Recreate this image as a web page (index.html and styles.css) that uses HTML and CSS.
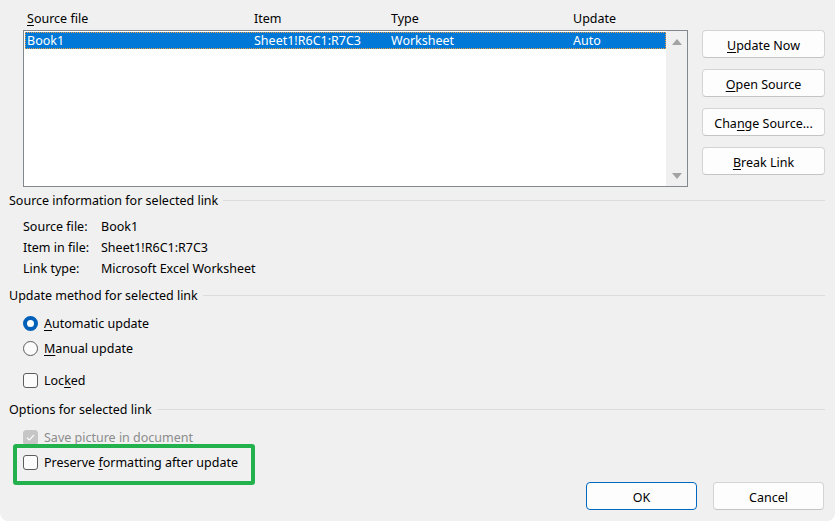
FILE: index.html
```html
<!DOCTYPE html>
<html>
<head>
<meta charset="utf-8">
<link rel="stylesheet" href="styles.css">
</head>
<body>
<div class="dialog">
  <div class="top">
    <div class="links">
      <div class="cols head">
        <span><u>S</u>ource file</span><span>Item</span><span>Type</span><span>Update</span>
      </div>
      <div class="listbox">
        <div class="rows">
          <div class="cols row selected">
            <span>Book1</span><span>Sheet1!R6C1:R7C3</span><span>Worksheet</span><span>Auto</span>
          </div>
        </div>
        <div class="scrollbar">
          <span class="arrow up"></span>
          <span class="arrow down"></span>
        </div>
      </div>
    </div>
    <div class="side-buttons">
      <button class="btn"><u>U</u>pdate Now</button>
      <button class="btn"><u>O</u>pen Source</button>
      <button class="btn">Cha<u>n</u>ge Source...</button>
      <button class="btn"><u>B</u>reak Link</button>
    </div>
  </div>

  <div class="group-title">Source information for selected link</div>
  <div class="info">
    <span>Source file:</span><span>Book1</span>
    <span>Item in file:</span><span>Sheet1!R6C1:R7C3</span>
    <span>Link type:</span><span>Microsoft Excel Worksheet</span>
  </div>

  <div class="group-title">Update method for selected link</div>
  <div class="options">
    <label class="opt"><span class="radio checked"></span><span><u>A</u>utomatic update</span></label>
    <label class="opt"><span class="radio"></span><span><u>M</u>anual update</span></label>
  </div>
  <div class="options gap">
    <label class="opt"><span class="check"></span><span>Loc<u>k</u>ed</span></label>
  </div>

  <div class="group-title">Options for selected link</div>
  <div class="options">
    <label class="opt disabled"><span class="check checked-dis">
      <svg viewBox="0 0 15 15" width="15" height="15"><path d="M4 7.8 L6.3 10 L11 5.2" fill="none" stroke="#fff" stroke-width="1.2"/></svg>
    </span><span>Save picture in document</span></label>
    <label class="opt highlighted"><span class="check"></span><span>Preserve <u>f</u>ormatting after update</span><span class="highlight"></span></label>
  </div>

  <div class="footer">
    <button class="btn primary">OK</button>
    <button class="btn">Cancel</button>
  </div>
</div>
</body>
</html>
```

FILE: styles.css
```css
html, body {
  margin: 0;
  padding: 0;
  background: #ffffff;
}
body {
  font-family: "Noto Sans", "Open Sans", sans-serif;
  font-size: 12.5px;
  color: #000;
}
u { text-decoration: underline; text-underline-offset: 2px; }

.dialog {
  width: 835px;
  height: 521px;
  box-sizing: border-box;
  background: #f0f0f0;
  border-radius: 0 0 8px 8px;
  padding: 10px 10px 0 9px;
}

.top {
  display: flex;
  gap: 14px;
  padding-left: 14px;
}
.links {
  width: 665px;
}
.cols {
  display: grid;
  grid-template-columns: 227px 137px 182px 1fr;
  padding-left: 4px;
  align-items: center;
}
.head {
  height: 20px;
  box-sizing: border-box;
  padding-top: 1px;
  align-items: start;
  line-height: 16px;
}
.listbox {
  height: 157px;
  box-sizing: border-box;
  border: 1px solid #828790;
  background: #fff;
  display: flex;
}
.rows {
  flex: 1;
  padding: 1px 0 0 1px;
}
.row {
  height: 17px;
  padding-left: 2px;
}
.row.selected {
  background: #0078d7;
  color: #fff;
  outline: 1px dotted #f0a040;
  outline-offset: -1px;
}
.scrollbar {
  width: 21px;
  background: #f0f0f0;
  display: flex;
  flex-direction: column;
  justify-content: space-between;
  align-items: center;
  padding: 8px 0 7px;
}
.arrow {
  width: 0;
  height: 0;
  border-left: 5px solid transparent;
  border-right: 5px solid transparent;
}
.arrow.up { border-bottom: 6px solid #a3a3a3; }
.arrow.down { border-top: 6px solid #a3a3a3; }

.side-buttons {
  display: flex;
  flex-direction: column;
  gap: 11px;
  padding-top: 20px;
}
.btn {
  font: inherit;
  color: #000;
  width: 123px;
  height: 28px;
  box-sizing: border-box;
  background: #fdfdfd;
  border: 1px solid #d4d4d4;
  border-bottom-color: #c4c4c4;
  border-radius: 4px;
  padding: 2px 0 0;
}

.group-title {
  display: flex;
  align-items: center;
  height: 16px;
  margin-top: 5px;
  width: 816px;
}
.group-title::after {
  content: "";
  flex: 1;
  height: 1px;
  background: #dcdcdc;
  margin-left: 5px;
}
.info {
  display: grid;
  grid-template-columns: 78px 1fr;
  grid-auto-rows: 21px;
  align-items: center;
  margin: 8px 0 8px 14px;
}
.options {
  display: flex;
  flex-direction: column;
  margin: 8px 0 0 14px;
}
.options.gap { margin-top: 7px; margin-bottom: 8px; }
.opt {
  display: flex;
  align-items: center;
  gap: 6px;
  height: 25px;
}
.radio, .check {
  width: 15px;
  height: 15px;
  box-sizing: border-box;
  border: 1px solid #5c5c5c;
  background: #fbfbfb;
  flex: none;
}
.radio { border-radius: 50%; }
.radio.checked {
  background: #fff;
  border: 4px solid #005fb8;
}
.check { border-radius: 3px; }
.check.checked-dis {
  background: #c6c6c6;
  border-color: #c6c6c6;
  position: relative;
}
.check.checked-dis svg {
  position: absolute;
  left: -1px;
  top: -1px;
}
.disabled { color: #8c8c8c; }

.highlighted { position: relative; }
.highlight {
  position: absolute;
  left: -10px;
  top: -6px;
  width: 242px;
  height: 41px;
  box-sizing: border-box;
  border: 4px solid #23b14d;
  border-radius: 3px;
  pointer-events: none;
}

.footer {
  display: flex;
  justify-content: flex-end;
  gap: 16px;
  margin-top: 7px;
  padding-right: 1px;
}
.footer .btn { width: 111px; }
.btn.primary {
  background: #fdfdfd;
  border: 1px solid #0067c0;
}
```
